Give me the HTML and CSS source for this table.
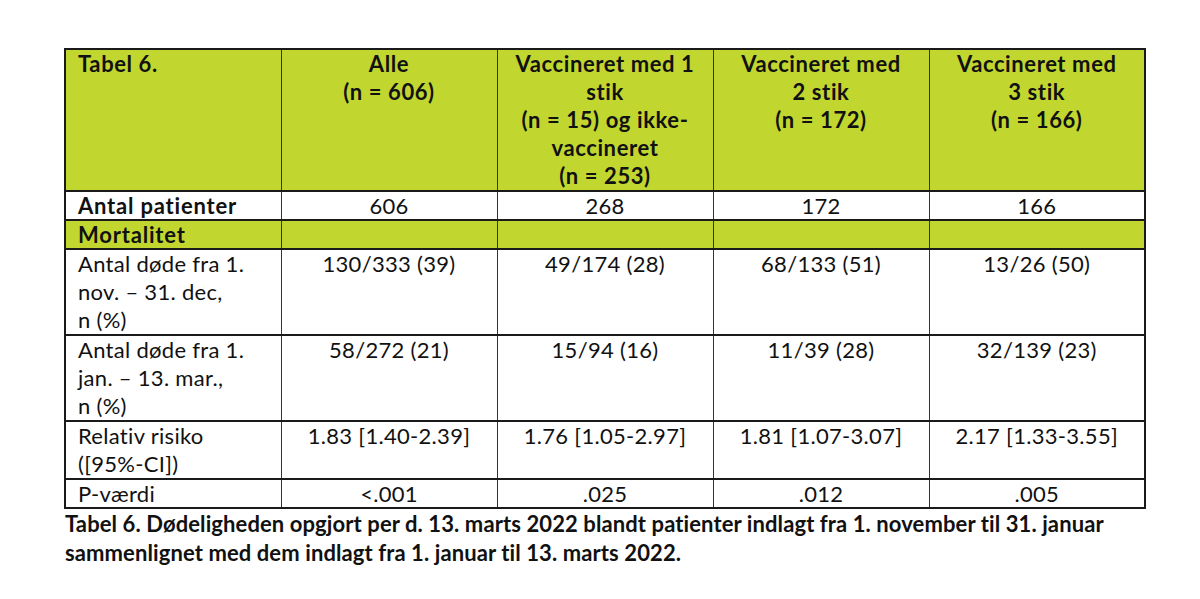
FILE: index.html
```html
<!DOCTYPE html>
<html lang="da">
<head>
<meta charset="utf-8">
<title>Tabel 6</title>
<link rel="stylesheet" href="styles.css">
</head>
<body>
<div class="page">
  <table class="data">
    <colgroup>
      <col class="c"><col class="c"><col class="c"><col class="c"><col class="c">
    </colgroup>
    <tr class="head">
      <th class="first">Tabel 6.</th>
      <th>Alle<br>(n = 606)</th>
      <th>Vaccineret med 1<br>stik<br>(n = 15) og ikke-<br>vaccineret<br>(n = 253)</th>
      <th>Vaccineret med<br>2 stik<br>(n = 172)</th>
      <th>Vaccineret med<br>3 stik<br>(n = 166)</th>
    </tr>
    <tr class="single">
      <td class="first bold">Antal patienter</td>
      <td>606</td><td>268</td><td>172</td><td>166</td>
    </tr>
    <tr class="single section">
      <td class="first bold">Mortalitet</td>
      <td></td><td></td><td></td><td></td>
    </tr>
    <tr>
      <td class="first">Antal døde fra 1.<br>nov. – 31. dec,<br>n (%)</td>
      <td>130/333 (39)</td><td>49/174 (28)</td><td>68/133 (51)</td><td>13/26 (50)</td>
    </tr>
    <tr>
      <td class="first">Antal døde fra 1.<br>jan. – 13. mar.,<br>n (%)</td>
      <td>58/272 (21)</td><td>15/94 (16)</td><td>11/39 (28)</td><td>32/139 (23)</td>
    </tr>
    <tr>
      <td class="first">Relativ risiko<br>([95%-CI])</td>
      <td>1.83 [1.40-2.39]</td><td>1.76 [1.05-2.97]</td><td>1.81 [1.07-3.07]</td><td>2.17 [1.33-3.55]</td>
    </tr>
    <tr class="single">
      <td class="first">P-værdi</td>
      <td>&lt;.001</td><td>.025</td><td>.012</td><td>.005</td>
    </tr>
  </table>
  <p class="caption">Tabel 6. Dødeligheden opgjort per d. 13. marts 2022 blandt patienter indlagt fra 1. november til 31. januar<br>sammenlignet med dem indlagt fra 1. januar til 13. marts 2022.</p>
</div>
</body>
</html>
```

FILE: styles.css
```css
html, body {
  margin: 0;
  padding: 0;
  background: #ffffff;
}

body {
  font-family: Lato, "Liberation Sans", sans-serif;
  color: #111111;
}

.page {
  padding: 48px 0 0 64px;
}

.data {
  border-collapse: collapse;
  table-layout: fixed;
  width: 1080px;
  border: 2px solid #1a1a1a;
}

.data col.c {
  width: 216px;
}

.data th,
.data td {
  font-size: 22px;
  line-height: 28px;
  padding: 0 6px;
  text-align: center;
  vertical-align: top;
  border-top: 2px solid #1a1a1a;
  border-bottom: 2px solid #1a1a1a;
  border-left: 1px solid #333333;
  border-right: 1px solid #333333;
  white-space: nowrap;
}

.data th {
  font-weight: 700;
  letter-spacing: 0.6px;
}

.data td {
  font-weight: 400;
  letter-spacing: 0.3px;
}

.data .single td {
  line-height: 27px;
}

.data .first {
  text-align: left;
  padding-left: 12px;
}

.data .bold {
  font-weight: 700;
  letter-spacing: 0.8px;
}

.head th,
.section td {
  background: #c1d72f;
}

.caption {
  margin: 0 0 0 1px;
  font-size: 22px;
  font-weight: 700;
  line-height: 29px;
  letter-spacing: 0.1px;
  white-space: nowrap;
  color: #111111;
}
```
